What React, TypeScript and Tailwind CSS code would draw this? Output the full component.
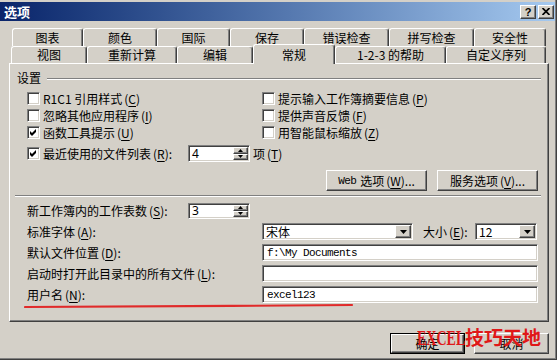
import React from "react";

const sunken =
  "bg-white border border-t-[#808080] border-l-[#808080] border-b-white border-r-white shadow-[inset_1px_1px_0_#404040,inset_-1px_-1px_0_#d4d0c8]";
const raised =
  "bg-[#d4d0c8] border border-t-white border-l-white border-b-[#404040] border-r-[#404040] shadow-[inset_-1px_-1px_0_#808080]";

function Acc({ k }: { k: string }) {
  return (
    <span className="ml-[2px]">
      (<span className="underline underline-offset-2">{k}</span>)
    </span>
  );
}

function Check({ checked }: { checked?: boolean }) {
  return (
    <span
      className={`${sunken} w-[13px] h-[13px] shrink-0 flex items-center justify-center`}>
      {checked && (
        <svg width="7" height="7" viewBox="0 0 7 7">
          <path d="M0 2 L2 4 L6 0 L6 3 L2 7 L0 5 Z" fill="#000" />
        </svg>
      )}
    </span>
  );
}

function Arrow({ up }: { up?: boolean }) {
  return (
    <svg width="5" height="3" viewBox="0 0 5 3">
      <path d={up ? "M2.5 0 L5 3 L0 3 Z" : "M0 0 L5 0 L2.5 3 Z"} fill="#000" />
    </svg>
  );
}

function Spin({ value, h }: { value: string; h: string }) {
  return (
    <div className={`${sunken} ${h} w-[62px] p-px flex items-stretch shrink-0`}>
      <span className="flex-1 pl-[2px] flex items-center font-['Noto_Sans',sans-serif] text-[12px]">
        {value}
      </span>
      <div className="w-[15px] flex flex-col">
        <div className={`${raised} flex-1 flex items-center justify-center`}>
          <Arrow up />
        </div>
        <div className={`${raised} flex-1 flex items-center justify-center`}>
          <Arrow />
        </div>
      </div>
    </div>
  );
}

function Combo({ value, w }: { value: string; w: string }) {
  return (
    <div className={`${sunken} ${w} h-[17px] p-px flex items-stretch shrink-0`}>
      <span className="flex-1 pl-[2px] flex items-center">{value}</span>
      <div className={`${raised} w-[16px] flex items-center justify-center`}>
        <svg width="7" height="4" viewBox="0 0 7 4">
          <path d="M0 0 L7 0 L3.5 4 Z" fill="#000" />
        </svg>
      </div>
    </div>
  );
}

function TextBox({ value }: { value?: string }) {
  return (
    <div
      className={`${sunken} w-[276px] h-[17px] pl-[4px] flex items-center font-['Liberation_Mono',monospace] text-[11px] tracking-[-0.6px]`}>
      {value}
    </div>
  );
}

function Tab({ label, w }: { label: string; w: string }) {
  return (
    <div
      className={`${w} h-full flex items-center justify-center border-t border-l border-r border-t-white border-l-white border-r-[#404040] rounded-t-[3px] shadow-[inset_-1px_0_0_#808080] whitespace-nowrap`}>
      {label}
    </div>
  );
}

function Button({
  children,
  w,
  primary,
}: {
  children: React.ReactNode;
  w: string;
  primary?: boolean;
}) {
  const inner = (
    <div className={`${raised} h-full w-full flex items-center justify-center whitespace-nowrap`}>
      {children}
    </div>
  );
  return primary ? (
    <div className={`${w} h-[21px] border border-black`}>{inner}</div>
  ) : (
    <div className={`${w} h-[21px]`}>{inner}</div>
  );
}

export default function App() {
  return (
    <div className="relative w-[557px] h-[360px] overflow-hidden bg-[#d4d0c8] border-r border-b border-r-[#404040] border-b-[#404040] shadow-[inset_-1px_-1px_0_#808080] font-['Noto_Sans_CJK_SC','Noto_Sans',sans-serif] text-[12px] leading-[14px] text-black">
      {/* Title bar */}
      <div className="mt-[2px] mr-px h-[19px] bg-linear-to-r from-[#0a246a] to-[#a6caf0] flex items-center pl-[4px] pr-[1px]">
        <span className="text-white font-bold text-[13px]">选项</span>
        <div className="ml-auto flex gap-[2px]">
          <div className={`${raised} w-[16px] h-[14px] flex items-center justify-center font-['Liberation_Sans',sans-serif] font-bold text-[11px]`}>
            ?
          </div>
          <div className={`${raised} w-[16px] h-[14px] flex items-center justify-center`}>
            <svg width="8" height="7" viewBox="0 0 8 7">
              <path d="M0.5 0 L7.5 7 M7.5 0 L0.5 7" stroke="#000" strokeWidth="1.7" />
            </svg>
          </div>
        </div>
      </div>

      {/* Tabs back row */}
      <div className="mt-[7px] ml-[12px] flex h-[18px]">
        <Tab label="图表" w="w-[71px]" />
        <Tab label="颜色" w="w-[74px]" />
        <Tab label="国际" w="w-[73px]" />
        <Tab label="保存" w="w-[74px]" />
        <Tab label="错误检查" w="w-[85px]" />
        <Tab label="拼写检查" w="w-[85px]" />
        <Tab label="安全性" w="w-[72px]" />
      </div>

      {/* Tabs front row */}
      <div className="ml-[11px] flex h-[17px] items-end">
        <Tab label="视图" w="w-[76px]" />
        <Tab label="重新计算" w="w-[90px]" />
        <Tab label="编辑" w="w-[76px]" />
        <div className="relative z-10 -mb-px w-[82px] h-[20px] bg-[#d4d0c8] flex items-center justify-center border-t border-l border-r border-t-white border-l-white border-r-[#404040] rounded-t-[3px] shadow-[inset_-1px_0_0_#808080]">
          常规
        </div>
        <Tab label="1-2-3 的帮助" w="w-[111px]" />
        <Tab label="自定义序列" w="w-[100px]" />
      </div>

      {/* Panel */}
      <div className="ml-[9px] w-[540px] h-[259px] border border-t-white border-l-white border-b-[#404040] border-r-[#404040] shadow-[inset_-1px_-1px_0_#808080] flex flex-col">
        <div className="mt-[7px] h-[14px] flex items-center pl-[7px] pr-[7px]">
          <span>设置</span>
          <div className="flex-1 ml-[6px] mt-[2px] h-[2px] border-t border-b border-t-[#808080] border-b-white" />
        </div>

        <div className="mt-[5px] pl-[17px] grid grid-cols-[235px_1fr] grid-rows-[17px_17px_17px]">
          <div className="flex items-center gap-[3px]">
            <Check />
            <span>R1C1 引用样式<Acc k="C" /></span>
          </div>
          <div className="flex items-center gap-[3px]">
            <Check />
            <span>提示输入工作簿摘要信息<Acc k="P" /></span>
          </div>
          <div className="flex items-center gap-[3px]">
            <Check />
            <span>忽略其他应用程序<Acc k="I" /></span>
          </div>
          <div className="flex items-center gap-[3px]">
            <Check />
            <span>提供声音反馈<Acc k="F" /></span>
          </div>
          <div className="flex items-center gap-[3px]">
            <Check checked />
            <span>函数工具提示<Acc k="U" /></span>
          </div>
          <div className="flex items-center gap-[3px]">
            <Check />
            <span>用智能鼠标缩放<Acc k="Z" /></span>
          </div>
        </div>

        <div className="mt-[4px] pl-[17px] h-[17px] flex items-center">
          <div className="w-[161px] flex items-center gap-[3px]">
            <Check checked />
            <span>最近使用的文件列表<Acc k="R" />:</span>
          </div>
          <Spin value="4" h="h-[17px]" />
          <span className="ml-[3px]">项<Acc k="T" /></span>
        </div>

        <div className="mt-[8px] pr-[10px] flex justify-end gap-[10px]">
          <Button w="w-[101px]">
            <span className="font-['Liberation_Mono',monospace] text-[11px] tracking-[-0.6px] mr-[4px]">Web</span>
            选项<Acc k="W" />...
          </Button>
          <Button w="w-[101px]">
            服务选项<Acc k="V" />...
          </Button>
        </div>

        <div className="mt-[4px] ml-[5px] mr-[7px] h-[2px] border-t border-b border-t-[#808080] border-b-white" />

        <div className="mt-[5px] pl-[17px] h-[17px] flex items-center">
          <span className="w-[161px]">新工作簿内的工作表数<Acc k="S" />:</span>
          <Spin value="3" h="h-[16px]" />
        </div>

        <div className="mt-[4px] pl-[17px] h-[17px] flex items-center">
          <span className="w-[235px]">标准字体<Acc k="A" />:</span>
          <div className="w-[276px] flex items-center">
            <Combo value="宋体" w="w-[151px]" />
            <span className="ml-[10px]">大小<Acc k="E" />:</span>
            <div className="ml-auto mr-px">
              <Combo value="12" w="w-[62px]" />
            </div>
          </div>
        </div>

        <div className="mt-[4px] pl-[17px] h-[17px] flex items-center">
          <span className="w-[235px]">默认文件位置<Acc k="D" />:</span>
          <TextBox value="f:\My Documents" />
        </div>

        <div className="mt-[4px] pl-[17px] h-[17px] flex items-center">
          <span className="w-[235px]">启动时打开此目录中的所有文件<Acc k="L" />:</span>
          <TextBox />
        </div>

        <div className="mt-[4px] pl-[17px] h-[17px] flex items-center">
          <span className="w-[235px]">用户名<Acc k="N" />:</span>
          <TextBox value="excel123" />
        </div>
      </div>

      {/* Dialog buttons */}
      <div className="mt-[11px] pr-[7px] flex justify-end gap-[9px]">
        <Button w="w-[75px]" primary>
          确定
        </Button>
        <Button w="w-[75px]">取消</Button>
      </div>

      {/* Red annotation underline */}
      <svg
        className="absolute left-[24px] top-[302px]"
        width="330"
        height="8"
        viewBox="0 0 330 8">
        <path
          d="M1 5 C 100 4.5, 220 4, 328 3"
          stroke="#e02a2a"
          strokeWidth="2.2"
          fill="none"
          strokeLinecap="round"
        />
      </svg>

      {/* Watermark */}
      <div className="absolute left-[417px] top-[327px] flex items-baseline leading-none text-[#e01818] font-bold">
        <span className="inline-block w-[48px] origin-left scale-x-[0.7] whitespace-nowrap font-['Liberation_Serif',serif] text-[20px]">
          EXCEL
        </span>
        <span className="text-[19px] font-['Noto_Sans_CJK_SC',sans-serif]">技巧天地</span>
      </div>
    </div>
  );
}
